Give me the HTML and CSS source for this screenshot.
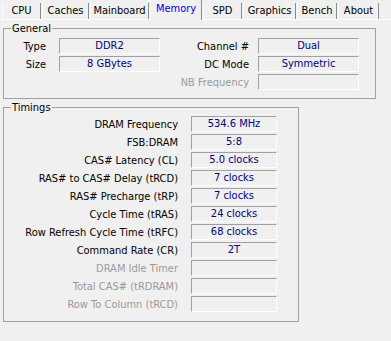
FILE: index.html
```html
<!DOCTYPE html>
<html lang="en">
<head>
    <meta charset="UTF-8">
    <title>CPU-Z Memory</title>
    <link rel="stylesheet" href="styles.css">
</head>
<body>

<div class="tabs">
    <div class="tab">CPU</div>
    <div class="tab">Caches</div>
    <div class="tab">Mainboard</div>
    <div class="tab tab-active">Memory</div>
    <div class="tab">SPD</div>
    <div class="tab">Graphics</div>
    <div class="tab">Bench</div>
    <div class="tab">About</div>
</div>

<div class="panel">
    <div class="group group-general">
        <div class="group-title">General</div>
        <div class="general-rows">
            <span class="lbl">Type</span>
            <span class="field">DDR2</span>
            <span class="lbl lbl-right">Channel #</span>
            <span class="field">Dual</span>

            <span class="lbl">Size</span>
            <span class="field">8 GBytes</span>
            <span class="lbl lbl-right">DC Mode</span>
            <span class="field">Symmetric</span>

            <span></span>
            <span></span>
            <span class="lbl lbl-right disabled">NB Frequency</span>
            <span class="field"></span>
        </div>
    </div>

    <div class="group group-timings">
        <div class="group-title">Timings</div>
        <div class="timing-rows">
            <span class="lbl">DRAM Frequency</span><span class="field">534.6 MHz</span>
            <span class="lbl">FSB:DRAM</span><span class="field">5:8</span>
            <span class="lbl">CAS# Latency (CL)</span><span class="field">5.0 clocks</span>
            <span class="lbl">RAS# to CAS# Delay (tRCD)</span><span class="field">7 clocks</span>
            <span class="lbl">RAS# Precharge (tRP)</span><span class="field">7 clocks</span>
            <span class="lbl">Cycle Time (tRAS)</span><span class="field">24 clocks</span>
            <span class="lbl">Row Refresh Cycle Time (tRFC)</span><span class="field">68 clocks</span>
            <span class="lbl">Command Rate (CR)</span><span class="field">2T</span>
            <span class="lbl disabled">DRAM Idle Timer</span><span class="field"></span>
            <span class="lbl disabled">Total CAS# (tRDRAM)</span><span class="field"></span>
            <span class="lbl disabled">Row To Column (tRCD)</span><span class="field"></span>
        </div>
    </div>
</div>

</body>
</html>
```

FILE: styles.css
```css
body {
    margin: 0;
    background-color: #f0f0f0;
    font-family: "DejaVu Sans Condensed", "DejaVu Sans", sans-serif;
    font-stretch: condensed;
    font-size: 11px;
    color: #000;
}

/* tab strip */
.tabs {
    display: flex;
    align-items: flex-end;
    height: 19px;
    padding-left: 2px;
    border-bottom: 1px solid #fff;
}
.tab {
    box-sizing: border-box;
    flex: none;
    height: 16px;
    line-height: 16px;
    margin-right: 1px;
    text-align: center;
    white-space: nowrap;
    border-left: 1px solid #fff;
    border-right: 1px solid #8c8c8c;
}
.tab:nth-child(1) { width: 39px; }
.tab:nth-child(2) { width: 47px; }
.tab:nth-child(3) { width: 59px; }
.tab:nth-child(4) { width: 52px; }
.tab:nth-child(5) { width: 39px; }
.tab:nth-child(6) { width: 53px; }
.tab:nth-child(7) { width: 40px; }
.tab:nth-child(8) { width: 41px; }
.tab-active {
    height: 20px;
    line-height: 18px;
    margin-bottom: -1px;
    padding-bottom: 1px;
    background-color: #f0f0f0;
    color: #0000ff;
}

/* panel */
.panel {
    padding: 8px 0 0 3px;
}
.group {
    box-sizing: border-box;
    border: 1px solid #a0a0a0;
}
.group-title {
    width: fit-content;
    margin: -7px 0 0 7px;
    padding: 0 1px;
    line-height: 13px;
    background-color: #f0f0f0;
}
.group-general {
    width: 373px;
    padding-bottom: 8px;
}
.group-timings {
    width: 296px;
    margin-top: 8px;
    padding-bottom: 9px;
}

.general-rows {
    display: grid;
    grid-template-columns: 55px 101px 98px 101px;
    grid-auto-rows: 16px;
    row-gap: 2px;
    margin-top: 3px;
}
.timing-rows {
    display: grid;
    grid-template-columns: 187px 86px;
    grid-auto-rows: 16px;
    row-gap: 2px;
    margin-top: 2px;
}

.lbl {
    text-align: right;
    line-height: 17px;
    padding-right: 13px;
    white-space: nowrap;
}
.lbl-right {
    padding-right: 9px;
}
.disabled {
    color: #9a9a9a;
}
.field {
    box-sizing: border-box;
    border: 1px solid;
    border-color: #a0a0a0 #fff #fff #a0a0a0;
    text-align: center;
    line-height: 14px;
    color: #000080;
    white-space: nowrap;
}
```
